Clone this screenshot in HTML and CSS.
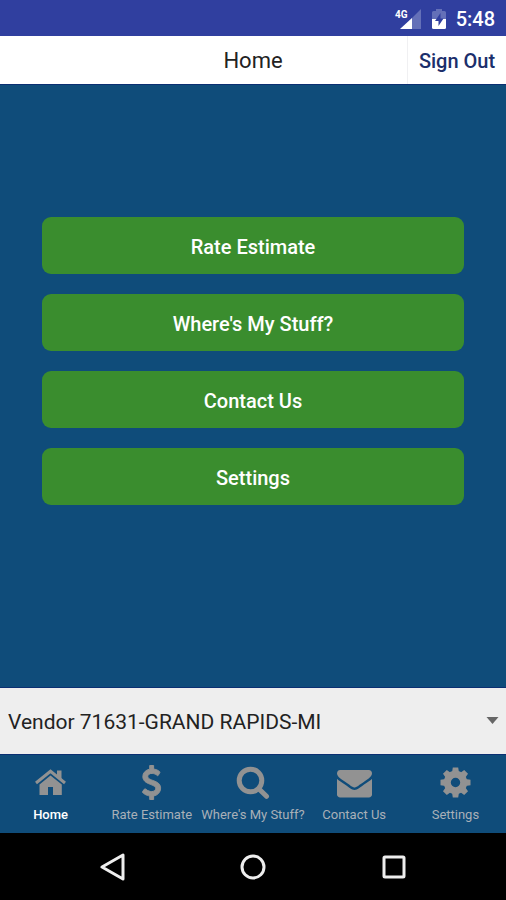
FILE: index.html
```html
<!DOCTYPE html>
<html lang="en">
<head>
<meta charset="utf-8">
<meta name="viewport" content="width=device-width, initial-scale=1">
<title>Home</title>
<link rel="stylesheet" href="styles.css">
</head>
<body>
<div class="status">
  <svg class="signal" viewBox="0 0 28 22" aria-hidden="true">
    <path class="dim" d="M27 1v20H7z"/>
    <path class="lit" d="M18 10v11H6z"/>
    <text class="network" x="1" y="10">4G</text>
  </svg>
  <svg class="battery" viewBox="0 0 14 20" aria-hidden="true">
    <path class="dim" d="M4 0h6v2h2.500q1.500 0 1.500 1.500V11H0V3.500Q0 2 1.500 2H4z"/>
    <path class="lit" d="M0 10h14v8.500q0 1.500-1.500 1.500h-11Q0 20 0 18.500z"/>
    <path class="bolt" d="M8.500 4L3 12h3.500v5L11.500 9.500H8.500z"/>
  </svg>
  <span class="clock">5:48</span>
</div>
<header class="header">
  <h1 class="title">Home</h1>
  <button class="signout" type="button">Sign Out</button>
</header>
<main class="main">
  <button class="action" type="button">Rate Estimate</button>
  <button class="action" type="button">Where's My Stuff?</button>
  <button class="action" type="button">Contact Us</button>
  <button class="action" type="button">Settings</button>
</main>
<div class="vendor">
  <select class="vendor-select" aria-label="Vendor">
    <option>Vendor 71631-GRAND RAPIDS-MI</option>
  </select>
  <svg class="caret" viewBox="0 0 12 8" aria-hidden="true"><path d="M0 0h12L6 7z"/></svg>
</div>
<nav class="tabs">
  <a class="tab active" href="#home">
    <svg class="icon" viewBox="0 0 35 35" aria-hidden="true">
      <path class="line roof" d="M3 18L17.500 6.300L32 18"/>
      <path d="M24 5.500h4.500v11L24 12.500z"/>
      <path d="M6.500 19.500L17.500 10.500L28.800 19.500V30H20v-8h-5v8H6.500z"/>
    </svg>
    <span>Home</span>
  </a>
  <a class="tab" href="#rate">
    <svg class="icon dollar" viewBox="0 0 1792 1792" aria-hidden="true"><path d="M1362 1185q0 153-99.500 263.500t-258.500 136.500v175q0 14-9 23t-23 9h-135q-13 0-22.500-9.500t-9.500-22.500v-175q-66-9-127.500-31t-101.500-44.500-74-48-46.500-37.500-17.500-18q-17-21-2-41l103-135q7-10 23-12 15-2 24 9l2 2q113 99 243 125 37 8 74 8 81 0 142.500-43t61.500-122q0-28-15-53t-33.500-42-58.500-37.500-66-32-80-32.500q-39-16-61.500-25t-61.500-26.500-62.500-31-56.500-35.500-53.500-42.500-43.500-49-35.500-58-21-66.500-8.500-78q0-138 98-242t255-134v-180q0-13 9.500-22.500t22.500-9.500h135q14 0 23 9t9 23v176q57 6 110.500 23t87 33.500 63.500 37.500 39 29 15 14q17 18 5 38l-81 146q-8 15-23 16-14 3-27-7-3-3-14.500-12t-39-26.500-58.500-32-74.500-26-85.500-11.500q-95 0-155 43t-60 111q0 26 8.500 48t29.500 41.500 39.500 33 56 31 60.500 27 70 27.500q53 20 81 31.500t76 35 75.500 42.500 62 50 53 63.500 31.500 76.500 13 94z"/></svg>
    <span>Rate Estimate</span>
  </a>
  <a class="tab" href="#track">
    <svg class="icon" viewBox="0 0 35 35" aria-hidden="true">
      <circle class="line lens" cx="15.500" cy="15.500" r="11.300"/>
      <path class="line lens" d="M24 24L31.500 31.300"/>
    </svg>
    <span>Where's My Stuff?</span>
  </a>
  <a class="tab" href="#contact">
    <svg class="icon" viewBox="0 0 1792 1792" aria-hidden="true"><path d="M1792 710v794q0 66-47 113t-113 47h-1472q-66 0-113-47t-47-113v-794q44 49 101 87 362 246 497 345 57 42 92.500 65.500t94.500 48 110 24.500h2q51 0 110-24.500t94.500-48 92.500-65.500q170-123 498-345 57-39 100-87zm0-294q0 79-49 151t-122 123q-376 261-468 325-10 7-42.500 31t-54 38.500-52 32.500-57.500 27-50 9h-2q-23 0-50-9t-57.500-27-52-32.500-54-38.500-42.500-31q-91-64-262-182.500t-205-142.500q-62-42-117-115.500t-55-136.500q0-78 41.500-130t118.500-52h1472q65 0 112.500 47t47.500 113z"/></svg>
    <span>Contact Us</span>
  </a>
  <a class="tab" href="#settings">
    <svg class="icon" viewBox="-17.500 -17.500 35 35" aria-hidden="true">
      <circle class="line gear" r="8.200"/>
      <path id="teeth" d="M-3.500-10L-2.700-15h5.400L3.500-10zM-3.500 10L-2.700 15h5.400L3.500 10zM-10-3.500L-15-2.700v5.400L-10 3.500zM10-3.500L15-2.700v5.400L10 3.500z"/>
      <use href="#teeth" transform="rotate(45)"/>
    </svg>
    <span>Settings</span>
  </a>
</nav>
<div class="system">
  <button class="key" type="button" aria-label="Back"><svg viewBox="0 0 28 28"><path d="M25 2v24L4 14z"/></svg></button>
  <button class="key" type="button" aria-label="Home screen"><svg viewBox="0 0 28 28"><circle cx="14" cy="14" r="11"/></svg></button>
  <button class="key" type="button" aria-label="Recent apps"><svg viewBox="0 0 28 28"><rect x="4" y="4" width="20" height="20" rx="1"/></svg></button>
</div>
</body>
</html>
```
FILE: styles.css
```css
* {
  box-sizing: border-box;
}

body {
  margin: 0;
  min-height: 100vh;
  display: flex;
  flex-direction: column;
  background: #0f4c7a;
  font-family: Roboto, "Liberation Sans", sans-serif;
}

button,
select {
  margin: 0;
  border: 0;
  font-family: inherit;
}

.status {
  display: flex;
  align-items: center;
  justify-content: flex-end;
  height: 36px;
  padding: 2px 11px 0 0;
  background: #303f9f;
  color: #fff;
}

.signal {
  width: 28px;
  height: 22px;
  margin-right: 10px;
}

.battery {
  width: 14px;
  height: 20px;
  margin-right: 10px;
}

.dim {
  fill: #6470b8;
}

.lit {
  fill: #fff;
}

.bolt {
  fill: #303f9f;
}

.network {
  fill: #fff;
  font-size: 10px;
  font-weight: 700;
}

.clock {
  font-size: 20px;
  font-weight: 500;
  line-height: 24px;
}

.header {
  display: grid;
  grid-template-columns: 99px 1fr 99px;
  align-items: stretch;
  height: 49px;
  background: #fff;
  border-bottom: 1px solid #0b2f72;
}

.title {
  grid-column: 2;
  margin: 0;
  padding-top: 2px;
  color: #222;
  font-size: 22px;
  font-weight: 400;
  line-height: 46px;
  text-align: center;
}

.signout {
  padding: 2px 0 0;
  border-left: 1px solid #f0f0f2;
  background: #fff;
  color: #1b2f6b;
  font-size: 20px;
  font-weight: 500;
}

.main {
  flex: 1;
  display: flex;
  flex-direction: column;
  gap: 20px;
  padding: 132px 42px 40px;
}

.action {
  height: 57px;
  padding: 2px 0 0;
  border-radius: 9px;
  background: #3a8d2e;
  color: #fff;
  font-size: 20px;
  font-weight: 500;
}

.vendor {
  position: relative;
  height: 68px;
  border-top: 1px solid #0b2f72;
  border-bottom: 1px solid #0b2f72;
}

.vendor-select {
  appearance: none;
  display: block;
  width: 100%;
  height: 100%;
  padding: 2px 32px 0 8px;
  border-radius: 0;
  background: #eee;
  color: #222;
  font-size: 21px;
}

.caret {
  position: absolute;
  top: 29px;
  right: 7px;
  width: 13px;
  height: 8px;
  fill: #666;
  pointer-events: none;
}

.tabs {
  display: grid;
  grid-template-columns: repeat(5, minmax(0, 1fr));
  height: 78px;
  padding-top: 10px;
}

.tab {
  display: flex;
  flex-direction: column;
  align-items: center;
  gap: 7px;
  color: #a9b0b8;
  font-size: 13px;
  line-height: 16px;
  text-decoration: none;
  white-space: nowrap;
}

.active {
  color: #fff;
  font-weight: 500;
}

.icon {
  width: 35px;
  height: 35px;
  fill: #929292;
}

.line {
  fill: none;
  stroke: #929292;
}

.roof {
  stroke-width: 3;
}

.lens {
  stroke-width: 5;
  stroke-linecap: round;
}

.gear {
  stroke-width: 7;
}

.dollar {
  stroke: #929292;
  stroke-width: 50;
}

.system {
  display: flex;
  align-items: center;
  justify-content: space-between;
  height: 67px;
  padding: 0 98px;
  background: #000;
}

.key {
  display: block;
  width: 28px;
  height: 28px;
  padding: 0;
  background: none;
}

.key svg {
  display: block;
  fill: none;
  stroke: #eee;
  stroke-width: 3;
  stroke-linejoin: round;
}
```
